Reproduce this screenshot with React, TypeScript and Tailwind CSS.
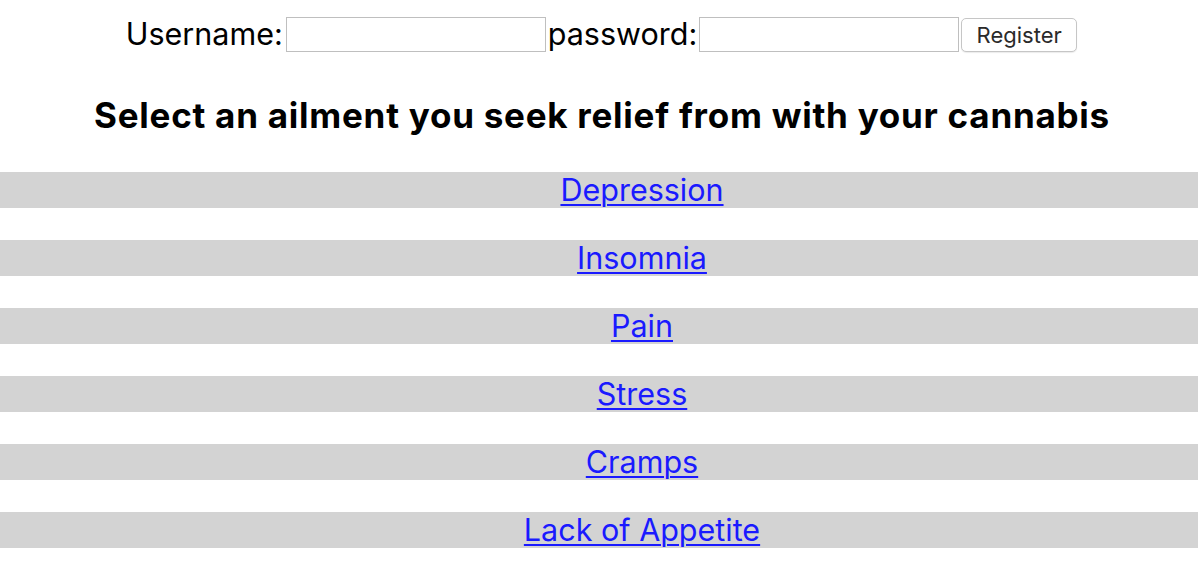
import React from "react";

const ailments = ["Depression", "Insomnia", "Pain", "Stress", "Cramps", "Lack of Appetite"];

export default function App() {
  return (
    <div className="min-h-[562px] bg-white text-black font-['Inter','Noto_Sans',sans-serif]">
      <div className="flex items-center justify-center pt-[17px] pl-[5px] h-[52px] text-[30.5px] leading-none">
        <span>Username:</span>
        <input className="ml-[3px] w-[260px] h-[35px] border border-[#bfbfbf] bg-white outline-none" />
        <span className="ml-[2px]">password:</span>
        <input className="ml-[2px] w-[260px] h-[35px] border border-[#bfbfbf] bg-white outline-none" />
        <button className="ml-[2px] w-[116px] h-[34px] mt-[1px] rounded-[5px] border border-[#c6c6c6] bg-white text-[22px] text-[#2a2a2a] shadow-[0_1px_1px_rgba(0,0,0,0.08)]">
          Register
        </button>
      </div>
      <h1 className="mt-[43px] pl-[6px] text-center text-[35px] font-bold leading-[40px] tracking-[0.75px]">
        Select an ailment you seek relief from with your cannabis
      </h1>
      <ul className="mt-[37px] flex flex-col gap-[32px]">
        {ailments.map((a) => (
          <li key={a} className="h-[36px] bg-[#d3d3d3] pl-[86px] text-center text-[30.5px] leading-[36px]">
            <a href="#" className="text-[#1a1aff] underline underline-offset-[3px] decoration-[2px]">
              {a}
            </a>
          </li>
        ))}
      </ul>
    </div>
  );
}
